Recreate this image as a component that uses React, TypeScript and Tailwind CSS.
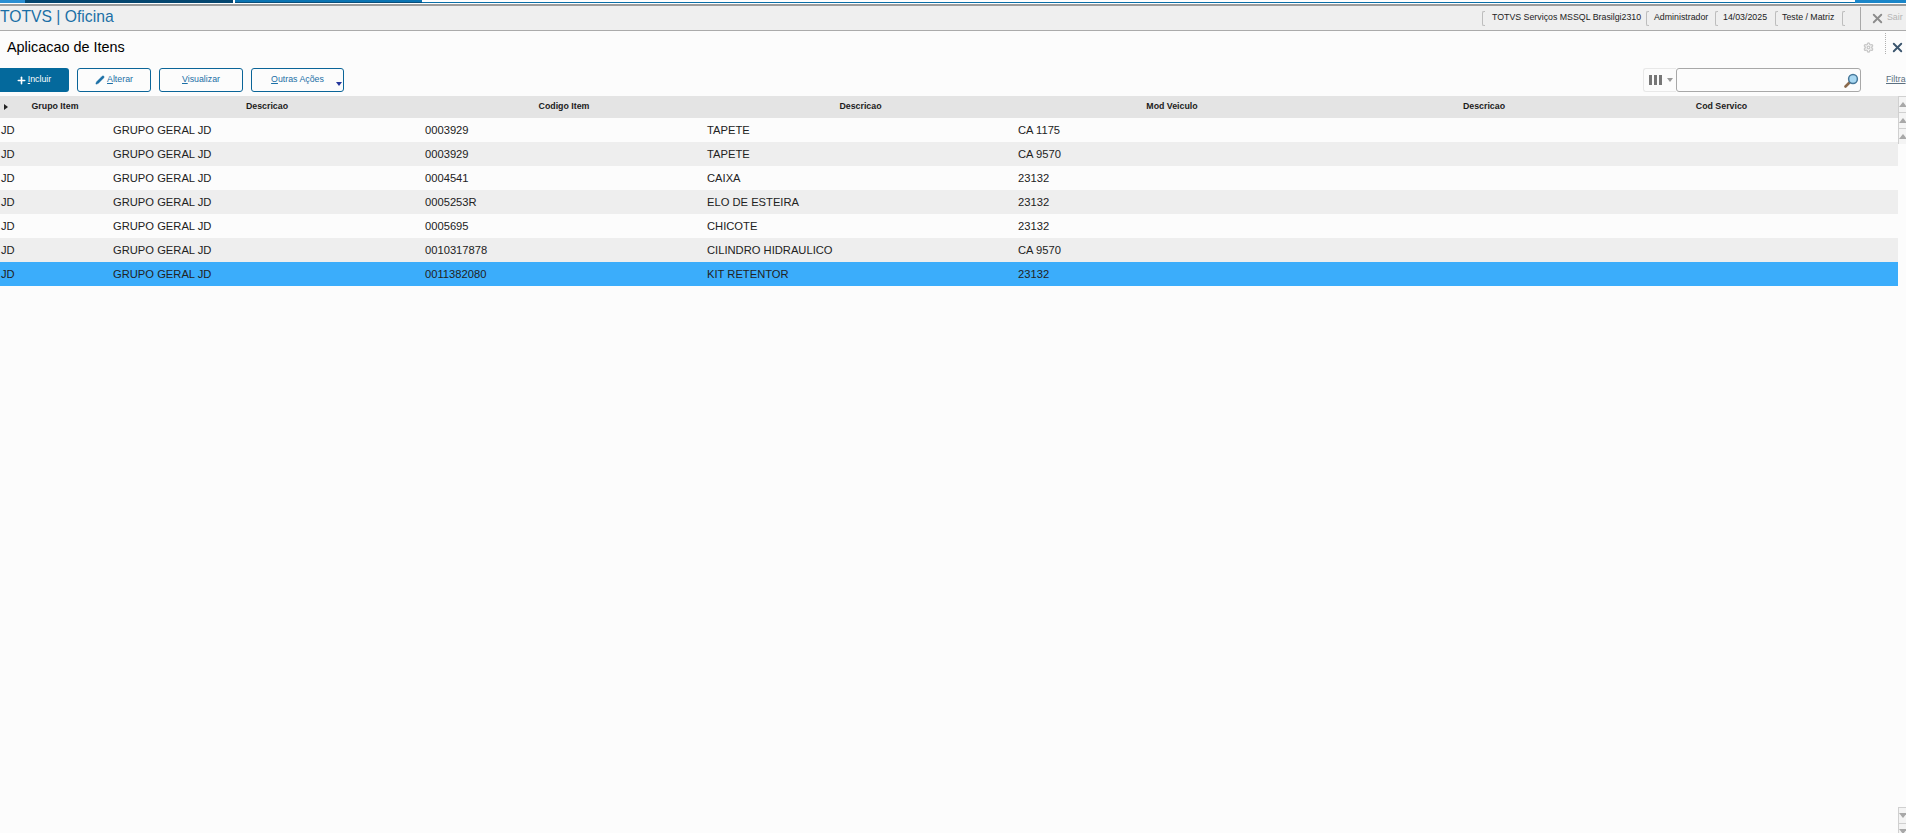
import { Pencil, Plus, Settings, X } from 'lucide-react'
import type { ReactNode } from 'react'

const rows = [
  { code: '0003929', desc: 'TAPETE', model: 'CA 1175' },
  { code: '0003929', desc: 'TAPETE', model: 'CA 9570' },
  { code: '0004541', desc: 'CAIXA', model: '23132' },
  { code: '0005253R', desc: 'ELO DE ESTEIRA', model: '23132' },
  { code: '0005695', desc: 'CHICOTE', model: '23132' },
  { code: '0010317878', desc: 'CILINDRO HIDRAULICO', model: 'CA 9570' },
  { code: '0011382080', desc: 'KIT RETENTOR', model: '23132' },
]

const columns = ['Grupo Item', 'Descricao', 'Codigo Item', 'Descricao', 'Mod Veiculo', 'Descricao', 'Cod Servico']
const gridCols = 'grid grid-cols-[112px_312px_282px_311px_312px_312px_163px_94px]'

function Sep() {
  return <span className="h-[15px] w-[3px] rounded-l-[2px] border-l border-y border-[#bdbdbd]" />
}

function ActionButton({ className, children }: { className: string; children: ReactNode }) {
  return (
    <button className={`relative flex h-[24px] items-center justify-center rounded-[3px] border border-[#0b6598] text-[8.8px] text-[#1b6fa6] ${className}`}>
      {children}
    </button>
  )
}

function ScrollButton({ up }: { up: boolean }) {
  return (
    <div className="flex h-[16px] items-center justify-center border-t border-l border-[#d0d0d0] bg-[#f4f4f4] pl-[1px]">
      <span className={`h-0 w-0 border-x-[4px] border-x-transparent ${up ? 'border-b-[5px] border-b-[#a8a8a8]' : 'border-t-[5px] border-t-[#a8a8a8]'}`} />
    </div>
  )
}

export default function App() {
  return (
    <div className="flex h-[833px] w-[1906px] flex-col overflow-hidden bg-[#fcfcfc] font-['Liberation_Sans',Arial,sans-serif]">
      {/* faixa das abas */}
      <div className="flex h-[3px] shrink-0 bg-white">
        <div className="w-[25px] bg-[#2a8fd3]" />
        <div className="w-[208px] bg-[#04466f]" />
        <div className="ml-[2px] w-[187px] border-b border-[#0a4f7a] bg-[#0b74b2]" />
        <div className="flex-1 border-b border-[#0b6fa8] bg-white" />
        <div className="w-[51px] bg-[#1a86c9]" />
      </div>
      <div className="h-[1px] shrink-0 bg-white" />

      <header className="flex h-[27px] shrink-0 items-center justify-between border-t-2 border-b border-t-[#9c9c9c] border-b-[#ababab] bg-[#efefef]">
        <div className="pb-[2px] text-[15.7px] leading-none text-[#1b6fa6]">TOTVS | Oficina</div>
        <div className="flex items-center whitespace-nowrap text-[8.8px] text-[#222]">
          <Sep />
          <span className="ml-[7px] mr-[2px] w-[152px]">TOTVS Serviços MSSQL Brasilgi2310</span>
          <Sep />
          <span className="ml-[5px] w-[61px]">Administrador</span>
          <Sep />
          <span className="ml-[5px] w-[52px]">14/03/2025</span>
          <Sep />
          <span className="ml-[4px] w-[60px]">Teste / Matriz</span>
          <Sep />
          <span className="ml-[15px] h-[23px] w-[3px] border-l border-[#a8a8a8]" />
          <X className="ml-[7px] text-[#8c8c8c]" size={15} strokeWidth={3} />
          <span className="ml-[2px] w-[19px] text-[#b4b4b4]">Sair</span>
        </div>
      </header>

      <div className="flex h-[35px] shrink-0 items-center justify-between pb-[3px] pl-[7px]">
        <h1 className="text-[14.4px] leading-none font-normal text-black">Aplicacao de Itens</h1>
        <div className="flex items-center">
          <Settings className="mr-[11px] text-[#c8c8c8]" size={11} strokeWidth={3} />
          <span className="mr-[4px] mb-[8px] h-[21px] border-l border-dotted border-[#b0b0b0]" />
          <X className="mr-[1px] text-[#3c566e]" size={15} strokeWidth={3} />
        </div>
      </div>

      <div className="mt-[2px] flex h-[24px] shrink-0 items-center">
        <button className="flex h-[24px] w-[69px] items-center justify-center gap-[1px] rounded-r-[3px] bg-[#04699c] pr-[2px] text-[8.8px] text-white">
          <Plus size={11} strokeWidth={3.5} />
          <span><span className="underline">I</span>ncluir</span>
        </button>
        <ActionButton className="ml-[8px] w-[74px] gap-[2px]">
          <Pencil size={10} fill="#1b6fa6" strokeWidth={1} />
          <span><span className="underline">A</span>lterar</span>
        </ActionButton>
        <ActionButton className="ml-[8px] w-[84px]">
          <span><span className="underline">V</span>isualizar</span>
        </ActionButton>
        <ActionButton className="ml-[8px] w-[93px]">
          <span><span className="underline">O</span>utras Ações</span>
          <span className="absolute right-[1px] bottom-[5px] h-0 w-0 border-x-[3px] border-t-[4px] border-x-transparent border-t-[#24379c]" />
        </ActionButton>

        <div className="ml-auto flex h-[24px] items-center">
          <div className="flex h-[24px] w-[33px] items-center gap-[5px] rounded-l-[3px] border border-r-0 border-[#e8e8e8] pl-[5px]">
            <div className="flex gap-[2px]">
              <span className="h-[10px] w-[3px] bg-[#777]" />
              <span className="h-[10px] w-[3px] bg-[#777]" />
              <span className="h-[10px] w-[3px] bg-[#777]" />
            </div>
            <span className="h-0 w-0 border-x-[3px] border-t-[4px] border-x-transparent border-t-[#999]" />
          </div>
          <div className="flex h-[24px] w-[185px] items-center justify-end rounded-[3px] border border-[#a8a8a8] pr-[1px]">
            <svg width="15" height="15" viewBox="0 0 15 15">
              <line x1="6" y1="9" x2="1.5" y2="13.5" stroke="#8a6a4c" strokeWidth="2.6" strokeLinecap="round" />
              <circle cx="9" cy="6" r="4.4" fill="#a9d8f2" stroke="#47789a" strokeWidth="1.5" />
            </svg>
          </div>
          <span className="ml-[25px] w-[20px] whitespace-nowrap text-[8.8px] text-[#5b6f80] underline">Filtra</span>
        </div>
      </div>

      <div className="mt-[4px] flex min-h-0 flex-1">
        <div className="min-w-0 flex-1">
          <div className={`${gridCols} relative h-[22px] items-center bg-[#e4e4e4] text-center text-[8.8px] font-bold text-[#1c1c1c]`}>
            <span className="absolute left-[4px] top-[8px] h-0 w-0 border-y-[3px] border-l-[4px] border-y-transparent border-l-[#222]" />
            {columns.map((c, i) => (
              <span key={i} className="pr-[2px]">{c}</span>
            ))}
          </div>
          {rows.map((r, i) => (
            <div
              key={i}
              className={`${gridCols} h-[24px] items-center text-[11.2px] text-[#222] ${
                i === 6 ? 'bg-[#3badfb]' : i % 2 ? 'bg-[#eeeeee]' : 'bg-[#fcfcfc]'
              }`}
            >
              <span className="pl-[1px]">JD</span>
              <span className="pl-[1px]">GRUPO GERAL JD</span>
              <span className="pl-[1px]">{r.code}</span>
              <span className="pl-[1px]">{r.desc}</span>
              <span className="pl-[1px]">{r.model}</span>
            </div>
          ))}
        </div>

        <div className="flex w-[8px] shrink-0 flex-col justify-between">
          <div>
            <ScrollButton up />
            <ScrollButton up />
            <ScrollButton up />
          </div>
          <div className="mb-[-6px]">
            <ScrollButton up={false} />
            <ScrollButton up={false} />
          </div>
        </div>
      </div>
    </div>
  )
}
